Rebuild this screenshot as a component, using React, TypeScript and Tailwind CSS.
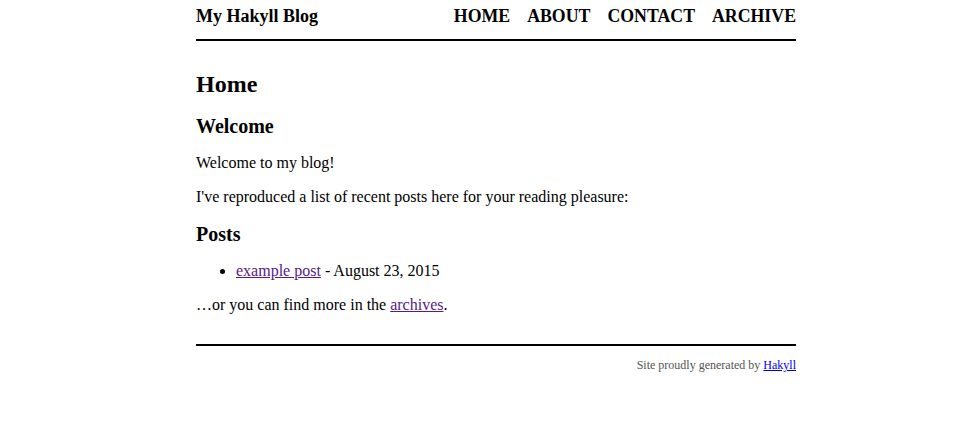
export default function App() {
  return (
    <div className="min-h-[448px] bg-white text-black font-['Liberation_Serif',serif]">
      <div className="ml-[196px] w-[600px] pt-[6px]">
        <header className="flex items-start justify-between border-b-2 border-black pb-[12px] mb-[29px]">
          <div className="text-[18px] leading-[21px] font-bold">
            <a href="#" className="text-black no-underline">My Hakyll Blog</a>
          </div>
          <nav className="text-right text-[17.8px] leading-[21px] font-bold uppercase">
            <a href="#" className="ml-[17px] text-black no-underline">Home</a>
            <a href="#" className="ml-[17px] text-black no-underline">About</a>
            <a href="#" className="ml-[17px] text-black no-underline">Contact</a>
            <a href="#" className="ml-[17px] text-black no-underline">Archive</a>
          </nav>
        </header>

        <main>
          <h1 className="text-[24px] leading-[28px] font-bold mb-[17px]">Home</h1>
          <h2 className="text-[20px] leading-[23px] font-bold mb-[16px]">Welcome</h2>
          <p className="text-[16px] leading-[18px] mb-[16px]">Welcome to my blog!</p>
          <p className="text-[16px] leading-[18px] mb-[17px]">
            I've reproduced a list of recent posts here for your reading pleasure:
          </p>
          <h2 className="text-[20px] leading-[23px] font-bold mb-[16px]">Posts</h2>
          <ul className="list-disc pl-[40px] mb-[16px] text-[16px] leading-[18px]">
            <li>
              <a href="#" className="text-[#551a8b] underline">example post</a> - August 23, 2015
            </li>
          </ul>
          <p className="text-[16px] leading-[18px]">
            …or you can find more in the{" "}
            <a href="#" className="text-[#551a8b] underline">archives</a>.
          </p>
        </main>

        <footer className="mt-[30px] border-t-2 border-black py-[12px] text-right text-[12px] leading-[14px] text-[#555]">
          Site proudly generated by{" "}
          <a href="#" className="text-[#0000ee] underline">Hakyll</a>
        </footer>
      </div>
    </div>
  );
}
